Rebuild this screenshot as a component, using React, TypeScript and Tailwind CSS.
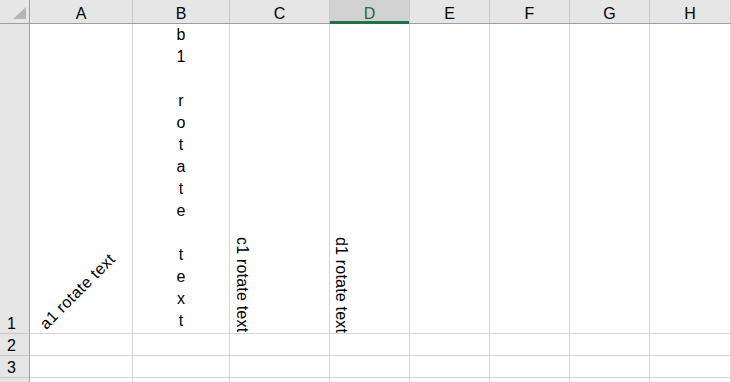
const cols = ["A", "B", "C", "D", "E", "F", "G", "H"];
const widths = ["w-[103px]", "w-[97px]", "w-[100px]", "w-[80px]", "w-[80px]", "w-[80px]", "w-[80px]", "flex-1"];
const stacked = ["b", "1", "", "r", "o", "t", "a", "t", "e", "", "t", "e", "x", "t"];

function HeaderRow() {
  return (
    <div className="flex h-[24px] bg-[#e6e6e6] border-b border-[#9e9e9e]">
      <div className="w-[30px] shrink-0 border-r border-[#9e9e9e]">
        <svg width="29" height="23" className="block">
          <polygon points="26,7 26,19 13,19" fill="#b5b5b5" />
        </svg>
      </div>
      {cols.map((c, i) => (
        <div
          key={c}
          className={`${widths[i]} shrink-0 flex items-end justify-center border-r border-[#c8c8c8] ${
            c === "D" ? "bg-[#d2d2d2] text-[#1d6a40] relative" : "text-black"
          }`}
        >
          <span className="leading-[18px]">{c}</span>
          {c === "D" && <div className="absolute left-0 right-0 bottom-[-1px] h-[3px] bg-[#217346]" />}
        </div>
      ))}
    </div>
  );
}

function RowHead({ n }: { n?: number }) {
  return (
    <div className="w-[30px] shrink-0 bg-[#e6e6e6] border-r border-[#9e9e9e] border-b border-b-[#c8c8c8] flex items-end pl-[7px]">
      <span className="leading-[18px]">{n}</span>
    </div>
  );
}

function EmptyRow({ n }: { n?: number }) {
  return (
    <div className="flex h-[22px]">
      <RowHead n={n} />
      {cols.map((c, i) => (
        <div key={c} className={`${widths[i]} shrink-0 border-r border-b border-[#d4d4d4]`} />
      ))}
    </div>
  );
}

export default function App() {
  return (
    <div
      className="w-[731px] h-[382px] overflow-hidden bg-white text-[16px] text-black"
      style={{ fontFamily: '"Liberation Sans", Arial, sans-serif' }}
    >
      <HeaderRow />
      <div className="flex h-[310px]">
        <RowHead n={1} />
        <div className="w-[103px] shrink-0 border-r border-b border-[#d4d4d4] flex items-end pl-[19px] overflow-hidden">
          <span className="leading-[18px] tracking-[0.4px] whitespace-nowrap origin-bottom-left -rotate-45">a1 rotate text</span>
        </div>
        <div className="w-[97px] shrink-0 border-r border-b border-[#d4d4d4] flex flex-col items-center">
          {stacked.map((ch, i) => (
            <span key={i} className="h-[22px] leading-[22px]">
              {ch}
            </span>
          ))}
        </div>
        <div className="w-[100px] shrink-0 border-r border-b border-[#d4d4d4] overflow-hidden pt-[213px] pl-[3px]">
          <span className="[writing-mode:vertical-rl] leading-[18px] tracking-[0.2px] whitespace-nowrap">c1 rotate text</span>
        </div>
        <div className="w-[80px] shrink-0 border-r border-b border-[#d4d4d4] overflow-hidden pt-[213px] pl-[2px]">
          <span className="[writing-mode:vertical-rl] leading-[18px] tracking-[0.2px] whitespace-nowrap">d1 rotate text</span>
        </div>
        {widths.slice(4).map((w, i) => (
          <div key={i} className={`${w} shrink-0 border-r border-b border-[#d4d4d4]`} />
        ))}
      </div>
      <EmptyRow n={2} />
      <EmptyRow n={3} />
      <EmptyRow />
    </div>
  );
}
